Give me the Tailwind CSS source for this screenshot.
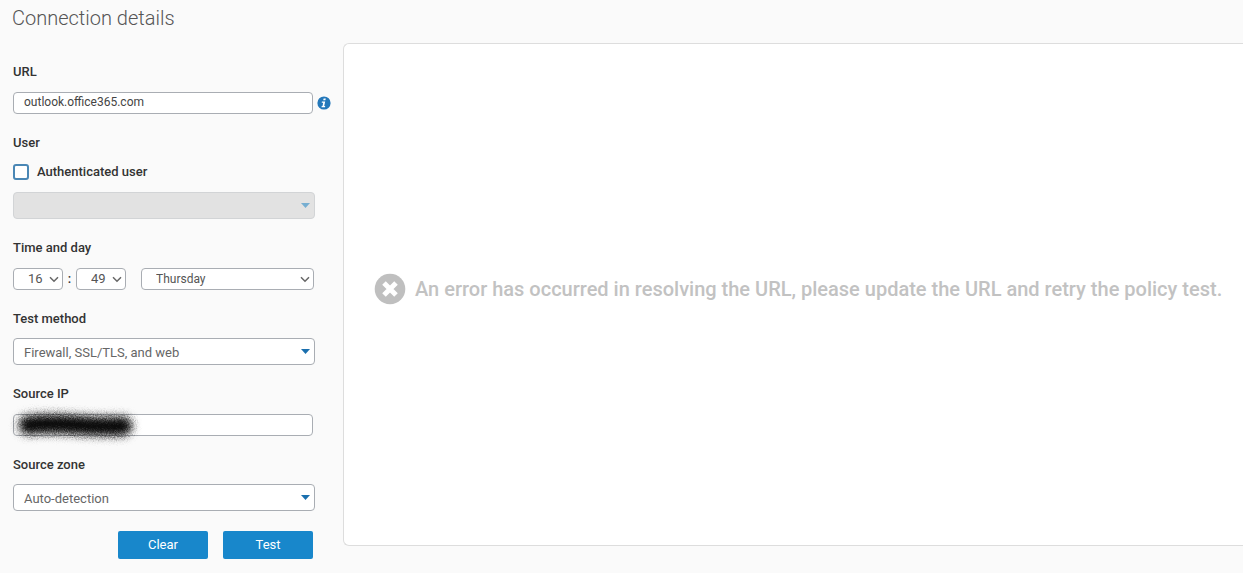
<!DOCTYPE html>
<html lang="en">
<head>
<meta charset="utf-8">
<meta name="viewport" content="width=device-width, initial-scale=1">
<title>Connection details</title>
<script src="https://cdn.jsdelivr.net/npm/@tailwindcss/browser@4"></script>
</head>
<body class="flex min-h-screen flex-col bg-[#fafafa] font-[Roboto,'Liberation_Sans',sans-serif] text-[13px] leading-5 text-[#333]">
<h1 class="px-3 pt-1 text-xl leading-7 font-light text-[#555]">Connection details</h1>
<main class="flex grow">
  <form class="w-[343px] shrink-0 pt-[30px] pr-7 pb-3.5 pl-[13px]">
    <label for="url" class="block font-medium">URL</label>
    <div class="mt-2.5 flex items-center gap-1">
      <input id="url" type="text" value="outlook.office365.com" class="h-[22px] w-[300px] shrink-0 rounded border border-[#a9adb3] bg-white px-2.5 pb-0.5 text-xs text-[#444]">
      <svg class="size-3.5 shrink-0" viewBox="0 0 14 14" role="img" aria-label="Information"><circle cx="7" cy="7" r="6.6" fill="#2478ba"/><path d="M6.6 2.5h2.2L8.4 4.3H6.2zM4.9 5.5h3.3L7.2 10h1l-.2 1.2H4.5l.2-1.2h.8l.7-3.3H4.7z" fill="#fff"/></svg>
    </div>

    <label for="user" class="mt-[19px] block font-medium">User</label>
    <label class="mt-[9px] flex items-center gap-2 font-medium">
      <input type="checkbox" class="size-4 appearance-none rounded-[3px] border-2 border-[#4a87b5] bg-white checked:bg-[#1887cb]">Authenticated user
    </label>
    <div class="relative mt-2.5">
      <select id="user" disabled class="block h-[27px] w-full appearance-none rounded border border-[#d2d4d6] bg-[#e2e2e2] px-2.5"><option></option></select>
      <svg class="pointer-events-none absolute top-[11px] right-[5px] h-[5px] w-[9px]" viewBox="0 0 9 5"><path d="M0 0h9L4.5 5z" fill="#76aed1"/></svg>
    </div>

    <label for="hour" class="mt-[19px] block font-medium">Time and day</label>
    <div class="mt-2.5 flex items-center">
      <div class="relative w-[50px]">
        <select id="hour" class="block h-[22px] w-full appearance-none rounded border border-[#a9adb3] bg-white pl-3.5 text-[#555]"><option>16</option></select>
        <svg class="pointer-events-none absolute top-2 right-1 h-[7px] w-2.5" viewBox="0 0 10 7"><path d="M1 1.2l4 4 4-4" fill="none" stroke="#666" stroke-width="1.5"/></svg>
      </div>
      <span class="w-[13px] text-center font-medium">:</span>
      <div class="relative w-[50px]">
        <select aria-label="Minute" class="block h-[22px] w-full appearance-none rounded border border-[#a9adb3] bg-white pl-3.5 text-[#555]"><option>49</option></select>
        <svg class="pointer-events-none absolute top-2 right-1 h-[7px] w-2.5" viewBox="0 0 10 7"><path d="M1 1.2l4 4 4-4" fill="none" stroke="#666" stroke-width="1.5"/></svg>
      </div>
      <div class="relative mr-px ml-[15px] grow">
        <select aria-label="Day" class="block h-[22px] w-full appearance-none rounded border border-[#a9adb3] bg-white pl-3.5 text-xs text-[#555]"><option>Thursday</option></select>
        <svg class="pointer-events-none absolute top-2 right-1 h-[7px] w-2.5" viewBox="0 0 10 7"><path d="M1 1.2l4 4 4-4" fill="none" stroke="#666" stroke-width="1.5"/></svg>
      </div>
    </div>

    <label for="method" class="mt-[19px] block font-medium">Test method</label>
    <div class="relative mt-[9px]">
      <select id="method" class="block h-[27px] w-full appearance-none rounded border border-[#a9adb3] bg-white px-2.5 pt-0.5 text-[#666]"><option>Firewall, SSL/TLS, and web</option></select>
      <svg class="pointer-events-none absolute top-[11px] right-[5px] h-[5px] w-[9px]" viewBox="0 0 9 5"><path d="M0 0h9L4.5 5z" fill="#1a6fae"/></svg>
    </div>

    <label for="ip" class="mt-[19px] block font-medium">Source IP</label>
    <div class="relative mt-2.5">
      <input id="ip" type="text" class="block h-[22px] w-[300px] rounded border border-[#a9adb3] bg-white px-2.5">
      <!-- Scribble hiding the address -->
      <svg class="pointer-events-none absolute -top-3 -left-3 h-[46px] w-[150px]" viewBox="0 0 150 46" aria-hidden="true">
        <filter id="spray" x="0" y="0" width="150" height="46" filterUnits="userSpaceOnUse" color-interpolation-filters="sRGB">
          <feGaussianBlur in="SourceGraphic" stdDeviation="4" result="soft"/>
          <feTurbulence type="fractalNoise" baseFrequency="0.9" numOctaves="2" seed="4" result="noise"/>
          <feDisplacementMap in="soft" in2="noise" scale="7" xChannelSelector="R" yChannelSelector="G"/>
        </filter>
        <path d="M27 23Q50 21 76 23T122 24" fill="none" stroke="#090909" stroke-width="19" stroke-linecap="round" filter="url(#spray)"/>
      </svg>
    </div>

    <label for="zone" class="mt-[19px] block font-medium">Source zone</label>
    <div class="relative mt-[9px]">
      <select id="zone" class="block h-[27px] w-full appearance-none rounded border border-[#a9adb3] bg-white px-2.5 pt-0.5 text-[#666]"><option>Auto-detection</option></select>
      <svg class="pointer-events-none absolute top-[11px] right-[5px] h-[5px] w-[9px]" viewBox="0 0 9 5"><path d="M0 0h9L4.5 5z" fill="#1a6fae"/></svg>
    </div>

    <div class="mt-5 flex w-[300px] justify-end gap-[15px] text-white">
      <button type="reset" class="h-7 w-[90px] rounded-xs bg-[#1887cb]">Clear</button>
      <button type="button" class="h-7 w-[90px] rounded-xs bg-[#1887cb]">Test</button>
    </div>
  </form>

  <section class="mt-[11px] mb-[27px] flex min-w-0 grow items-center gap-[9px] rounded-l-md border-y border-l border-[#ddd] bg-white pb-3 pl-[30px]">
    <svg class="size-8 shrink-0" viewBox="0 0 32 32" aria-hidden="true"><circle cx="16" cy="16" r="15.3" fill="#bfbfbf"/><path d="M10 10l12 12M22 10L10 22" stroke="#fff" stroke-width="5"/></svg>
    <p class="text-xl leading-6 font-medium whitespace-nowrap text-[#c2c2c2]" role="alert">An error has occurred in resolving the URL, please update the URL and retry the policy test.</p>
  </section>
</main>
</body>
</html>
